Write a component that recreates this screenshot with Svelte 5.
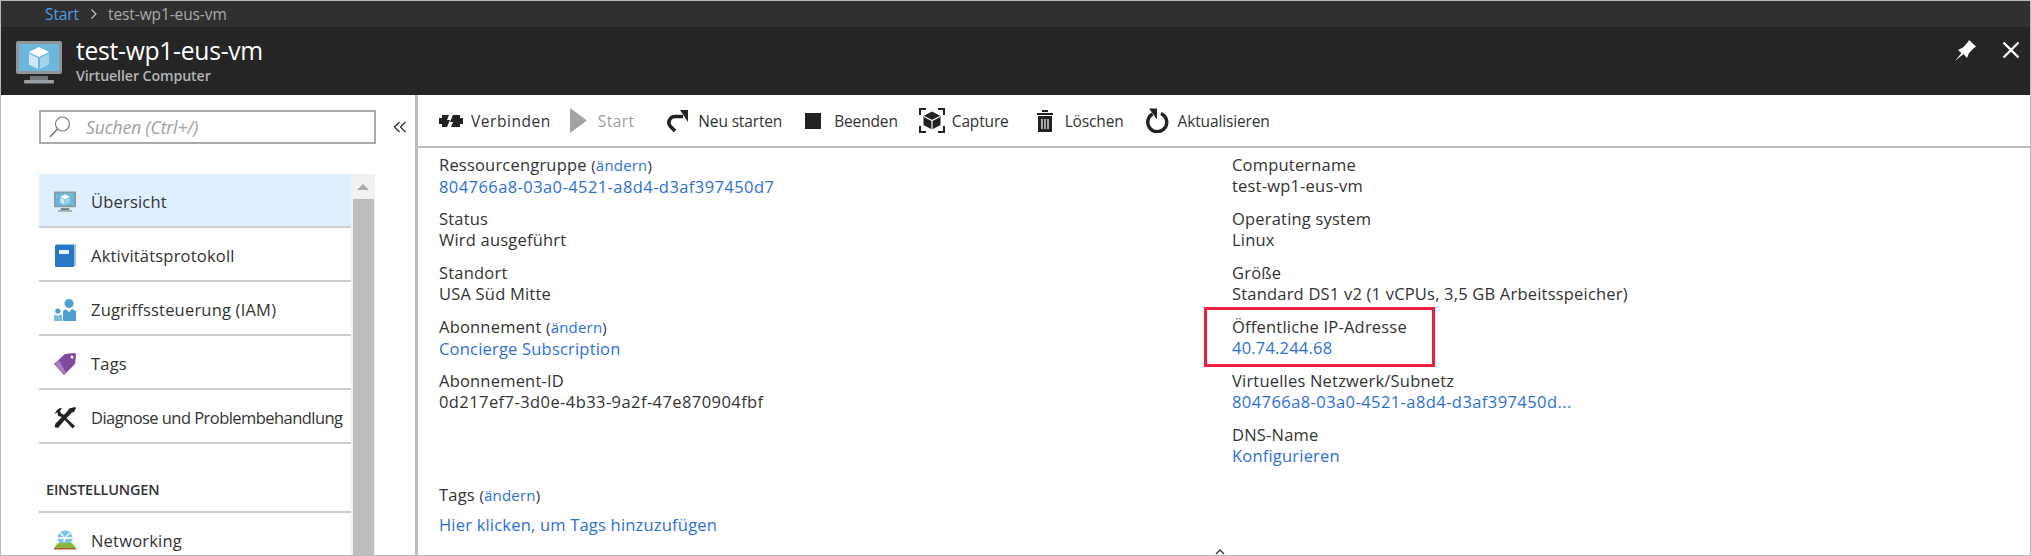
<script>
	const menu = [
		{ label: 'Übersicht', icon: 'vm', active: true },
		{ label: 'Aktivitätsprotokoll', icon: 'log' },
		{ label: 'Zugriffssteuerung (IAM)', icon: 'iam' },
		{ label: 'Tags', icon: 'tag' },
		{ label: 'Diagnose und Problembehandlung', icon: 'tools', tight: true }
	];

	const left = [
		{ label: 'Ressourcengruppe', change: true, value: '804766a8-03a0-4521-a8d4-d3af397450d7', link: true, wide: true },
		{ label: 'Status', value: 'Wird ausgeführt' },
		{ label: 'Standort', value: 'USA Süd Mitte' },
		{ label: 'Abonnement', change: true, value: 'Concierge Subscription', link: true },
		{ label: 'Abonnement-ID', value: '0d217ef7-3d0e-4b33-9a2f-47e870904fbf', wide: true }
	];

	const right = [
		{ label: 'Computername', value: 'test-wp1-eus-vm' },
		{ label: 'Operating system', value: 'Linux' },
		{ label: 'Größe', value: 'Standard DS1 v2 (1 vCPUs, 3,5 GB Arbeitsspeicher)' },
		{ label: 'Öffentliche IP-Adresse', value: '40.74.244.68', link: true, marked: true },
		{ label: 'Virtuelles Netzwerk/Subnetz', value: '804766a8-03a0-4521-a8d4-d3af397450d...', link: true, wide: true },
		{ label: 'DNS-Name', value: 'Konfigurieren', link: true }
	];
</script>

{#snippet vmIcon(size)}
	<svg width={size} height={size} viewBox="0 0 46 46">
		<rect x="0" y="1" width="46" height="33" rx="2" fill="#8f9599" />
		<rect x="3" y="4" width="40" height="27" fill="#6db7dc" />
		<path d="M14 36h18v4H14z" fill="#6f7478" />
		<rect x="8" y="40" width="30" height="3.5" rx="1" fill="#9a9fa3" />
		<path d="M23 7l10 5-10 5-10-5z" fill="#fff" />
		<path d="M13 13.500l9 4.500v11l-9-4.500z" fill="#cfe8f4" />
		<path d="M33 13.500l-9 4.500v11l9-4.500z" fill="#a5d4ea" />
	</svg>
{/snippet}

{#snippet field(f)}
	<div class="field" class:marked={f.marked}>
		<div>
			{f.label}
			{#if f.change}
				<span class="change">(<span class="link">ändern</span>)</span>
			{/if}
		</div>
		<div class:link={f.link} class:wide={f.wide}>{f.value}</div>
	</div>
{/snippet}

<div class="page">
	<div class="crumbs">
		<span class="start">Start</span>
		<svg class="chev" width="8" height="12" viewBox="0 0 8 12"><path d="M1.500 1.500L6 6l-4.500 4.500" fill="none" stroke="#ccc" stroke-width="1.100" /></svg>
		<span>test-wp1-eus-vm</span>
	</div>

	<header class="head">
		<div class="head-icon">{@render vmIcon(46)}</div>
		<div class="head-text">
			<div class="title">test-wp1-eus-vm</div>
			<div class="sub">Virtueller Computer</div>
		</div>
		<svg class="pin" width="21" height="21" viewBox="0 0 21 21">
			<path d="M0 21l6.500-8L3 10l5-2.500L13 2l1-2 7 6.500-2 1.500-5 5-2 5-3.500-4z" fill="#fff" />
		</svg>
		<svg class="close" width="18" height="18" viewBox="0 0 18 18">
			<path d="M1.500 1.500l15 15M16.500 1.500l-15 15" stroke="#fff" stroke-width="2.400" />
		</svg>
	</header>

	<div class="body">
		<aside class="side">
			<div class="search-row">
				<div class="search">
					<svg width="22" height="24" viewBox="0 0 22 24">
						<circle cx="13.500" cy="9" r="7" fill="none" stroke="#777" stroke-width="1.200" />
						<path d="M8.500 14L1 22" stroke="#777" stroke-width="1.600" />
					</svg>
					<span>Suchen (Ctrl+/)</span>
				</div>
				<svg class="collapse" width="14" height="12" viewBox="0 0 14 12">
					<path d="M6.500 1L1.500 6l5 5M12.500 1l-5 5 5 5" fill="none" stroke="#333" stroke-width="1.300" />
				</svg>
			</div>

			<div class="menu-wrap">
				<nav class="menu">
					{#each menu as m}
						<div class="item" class:active={m.active} class:tight={m.tight}>
							<span class="item-icon">
								{#if m.icon === 'vm'}
									{@render vmIcon(22)}
								{:else if m.icon === 'log'}
									<svg width="22" height="23" viewBox="0 0 22 23">
										<rect x="2" y="0" width="20" height="22" fill="#9cc3e6" />
										<rect x="1" y="1" width="19" height="22" rx="1" fill="#2a76c6" />
										<rect x="5" y="6" width="10" height="4" fill="#e6f0fa" />
									</svg>
								{:else if m.icon === 'iam'}
									<svg width="22" height="22" viewBox="0 0 22 22">
										<circle cx="15" cy="4.500" r="4.500" fill="#4e9fd0" />
										<path d="M9 12l3-2 3 3 3-3 4 2v10H9z" fill="#4e9fd0" />
										<circle cx="3.800" cy="12" r="2.600" fill="#4e9fd0" />
										<path d="M0 16.500l2-1 2 1.500 2-1.500 2 1v5.500H0z" fill="#7fbbdf" />
									</svg>
								{:else if m.icon === 'tag'}
									<svg width="22" height="22" viewBox="0 0 22 22">
										<path d="M0 11L11 1l9-1q2 0 2 2l-1 9L10 22z" fill="#7f4a9e" />
										<path d="M0 11l10 11 2-2L5 7z" fill="#a77cc2" />
										<circle cx="18" cy="4" r="1.500" fill="#fff" />
									</svg>
								{:else}
									<svg width="22" height="22" viewBox="0 0 22 22">
										<path d="M1 6L3 3l3-2 2 .5L6 4l1 2.500L9 7l2 3 10 9-2.500 2.500-9-10-3-2-2.500-.5L3.500 5 1.500 7z" fill="#222" />
										<path d="M21 0l1 1-2 4-2 .5L9 15l-5 6-3.500-1 1-3.500L7 11l7-7.500 1-2z" fill="#222" />
									</svg>
								{/if}
							</span>
							<span class="item-label">{m.label}</span>
						</div>
					{/each}
					<div class="group">EINSTELLUNGEN</div>
					<div class="item last">
						<span class="item-icon">
							<svg width="22" height="20" viewBox="0 0 22 20">
								<circle cx="11" cy="8" r="7.500" fill="#7cc3e6" />
								<path d="M6 3q5 3 4 9M16 3q-5 3-6 9M3.500 8h15" fill="none" stroke="#fff" stroke-width="1.400" />
								<path d="M4 13h14l4 5H0z" fill="#8cb83e" />
								<rect x="0" y="18" width="22" height="1.500" fill="#b5533c" />
							</svg>
						</span>
						<span class="item-label">Networking</span>
					</div>
				</nav>
				<div class="scroll">
					<div class="scroll-up"><i></i></div>
					<div class="thumb"></div>
				</div>
			</div>
		</aside>

		<main class="main">
			<div class="toolbar">
				<span class="cmd c-connect">
					<svg width="24" height="14" viewBox="0 0 24 14">
						<path d="M0 4h3V1h7l-2 5h3l-3 7H3v-3H0z" fill="#222" />
						<path d="M14 1h7v3h3v6h-3v3h-9l2-5h-3l3-7z" fill="#222" />
					</svg>
					Verbinden
				</span>
				<span class="cmd off c-start">
					<svg width="17" height="25" viewBox="0 0 17 25"><path d="M0 0l17 12.500L0 25z" fill="#a3a3a3" /></svg>
					Start
				</span>
				<span class="cmd c-restart">
					<svg width="23" height="24" viewBox="0 0 23 24">
						<path d="M17 7.500H9.500a6 6 0 0 0-5 10l4.500 4.500" fill="none" stroke="#222" stroke-width="3.600" />
						<path d="M14 1l8 0v12z" fill="#222" />
					</svg>
					Neu starten
				</span>
				<span class="cmd c-stop">
					<svg width="16" height="16" viewBox="0 0 16 16"><rect width="16" height="16" fill="#222" /></svg>
					Beenden
				</span>
				<span class="cmd c-capture">
					<svg width="26" height="25" viewBox="0 0 26 25">
						<path d="M1 7V1h6M19 1h6v6M25 18v6h-6M7 24H1v-6" fill="none" stroke="#222" stroke-width="2" />
						<path d="M13 3.500l8.500 4.500v9L13 21.500 4.500 17V8z" fill="#222" />
						<path d="M5 8.500l8 4 8-4M13 12.500v9" fill="none" stroke="#fff" stroke-width="1.200" />
					</svg>
					Capture
				</span>
				<span class="cmd c-delete">
					<svg width="16" height="22" viewBox="0 0 16 22">
						<path d="M0 3h16v2H0zM5 0h6v2H5zM1 6h14v16H1z" fill="#222" />
						<path d="M5 9v10M8 9v10M11 9v10" stroke="#fff" stroke-width="1.200" />
					</svg>
					Löschen
				</span>
				<span class="cmd c-refresh">
					<svg width="24" height="25" viewBox="0 0 24 25">
						<path d="M15 5.500a9.500 9.500 0 1 1-8.500 .5" fill="none" stroke="#222" stroke-width="3.400" />
						<path d="M3 .5h8v11z" fill="#222" />
					</svg>
					Aktualisieren
				</span>
			</div>

			<div class="details">
				<div class="col">
					{#each left as f}{@render field(f)}{/each}
				</div>
				<div class="col">
					{#each right as f}{@render field(f)}{/each}
				</div>
			</div>

			<div class="tags">
				<div>Tags <span class="change">(<span class="link">ändern</span>)</span></div>
				<div class="link add">Hier klicken, um Tags hinzuzufügen</div>
			</div>

			<svg class="caret" width="10" height="6" viewBox="0 0 10 6"><path d="M1 5l4-4 4 4" fill="none" stroke="#333" stroke-width="1.300" /></svg>
		</main>
	</div>
</div>

<style>
	:global(body) {
		margin: 0;
		background: #fff;
	}

	.page {
		width: 2031px;
		height: 556px;
		box-sizing: border-box;
		border: 1px solid #b9b9b9;
		display: flex;
		flex-direction: column;
		overflow: hidden;
		font-family: 'Open Sans', sans-serif;
		font-size: 16.5px;
		color: #333;
	}

	.crumbs {
		height: 26px;
		flex: none;
		background: #303030;
		color: #a9a9a9;
		display: flex;
		align-items: center;
		padding-left: 44px;
		font-size: 15.5px;
		letter-spacing: -0.1px;
	}

	.start {
		color: #4f9fe6;
	}

	.chev {
		margin: 0 10px 0 11px;
	}

	.head {
		height: 68px;
		flex: none;
		background: #252525;
		display: flex;
		align-items: center;
		padding-left: 15px;
		color: #fff;
	}

	.head-icon {
		width: 46px;
		height: 46px;
		margin-right: 14px;
		margin-top: 3px;
	}

	.head-text {
		flex: 1;
		margin-top: -2px;
	}

	.title {
		font-size: 24.7px;
		line-height: 32px;
		letter-spacing: -0.3px;
	}

	.sub {
		font-size: 14.2px;
		font-weight: 600;
		line-height: 18px;
		color: #b4b4b4;
		letter-spacing: -0.1px;
	}

	.pin {
		margin-right: 26px;
		margin-top: -22px;
	}

	.close {
		margin-right: 10px;
		margin-top: -22px;
	}

	.body {
		flex: 1;
		display: flex;
		min-height: 0;
	}

	.side {
		flex: none;
		box-sizing: border-box;
		padding: 15px 0 0 38px;
		border-right: 3px solid #bdbdbd;
		width: 417px;
	}

	.search-row {
		display: flex;
		align-items: center;
		height: 34px;
	}

	.search {
		width: 337px;
		height: 34px;
		box-sizing: border-box;
		border: 2px solid #a9a9a9;
		display: flex;
		align-items: center;
		padding-left: 8px;
		gap: 15px;
		font-style: italic;
		color: #a0a0a0;
		font-size: 17.5px;
		letter-spacing: -0.1px;
	}

	.collapse {
		margin-left: 17px;
	}

	.menu-wrap {
		display: flex;
		margin-top: 30px;
		width: 336px;
		height: 400px;
	}

	.menu {
		width: 312px;
		flex: none;
	}

	.item {
		height: 54px;
		box-sizing: border-box;
		padding-top: 3px;
		border-bottom: 2px solid #cdcdcd;
		display: flex;
		align-items: center;
		padding-left: 15px;
		white-space: nowrap;
		letter-spacing: 0.2px;
	}

	.item.tight {
		letter-spacing: -0.55px;
	}

	.item.active {
		background: #dfefff;
	}

	.item.last {
		border-bottom: 0;
		padding-top: 0;
	}

	.item-icon {
		width: 22px;
		height: 23px;
		display: flex;
		align-items: center;
		justify-content: center;
		margin-right: 15px;
	}

	.group {
		height: 69px;
		box-sizing: border-box;
		padding: 36px 0 0 7px;
		border-bottom: 2px solid #cdcdcd;
		font-size: 14.5px;
		font-weight: 600;
		line-height: 20px;
		color: #333;
		letter-spacing: -0.2px;
	}

	.scroll {
		width: 24px;
		flex: none;
		background: #f1f1f1;
		display: flex;
		flex-direction: column;
		align-items: center;
	}

	.scroll-up {
		height: 25px;
		flex: none;
		width: 100%;
		display: flex;
		align-items: center;
		justify-content: center;
	}

	.scroll-up i {
		width: 0;
		height: 0;
		border: 6px solid transparent;
		border-top: 0;
		border-bottom: 6px solid #aaa;
	}

	.thumb {
		width: 21px;
		flex: 1;
		background: #bdbdbd;
	}

	.main {
		flex: 1;
		min-width: 0;
		position: relative;
	}

	.toolbar {
		height: 51px;
		border-bottom: 2px solid #bdbdbd;
		display: flex;
		align-items: center;
		padding-left: 21px;
		font-size: 15.5px;
		letter-spacing: -0.15px;
	}

	.cmd {
		display: flex;
		align-items: center;
		gap: 8px;
		white-space: nowrap;
		color: #333;
	}

	.cmd.off {
		color: #a0a0a0;
	}

	.c-connect {
		letter-spacing: 0.55px;
	}

	.c-start {
		margin-left: 19px;
		gap: 11px;
		letter-spacing: 0.4px;
	}

	.c-restart {
		margin-left: 32px;
		gap: 9px;
	}

	.c-stop {
		margin-left: 23px;
		gap: 13px;
	}

	.c-capture {
		margin-left: 21px;
		gap: 7px;
	}

	.c-delete {
		margin-left: 28px;
		gap: 12px;
	}

	.c-refresh {
		margin-left: 22px;
	}

	.details {
		display: grid;
		grid-template-columns: 793px 1fr;
		padding: 6px 0 0 21px;
		height: 336px;
		box-sizing: border-box;
	}

	.field {
		height: 54px;
		line-height: 21px;
		position: relative;
		white-space: nowrap;
		letter-spacing: 0.2px;
	}

	.wide {
		letter-spacing: 0.42px;
	}

	.field.marked::after {
		content: '';
		position: absolute;
		left: -28px;
		top: -9px;
		width: 225px;
		height: 54px;
		border: 3px solid #ee1c3f;
	}

	.change {
		font-size: 15px;
	}

	.link {
		color: #2d6fd8;
	}

	.tags {
		padding-left: 21px;
		line-height: 21px;
		letter-spacing: 0.2px;
	}

	.add {
		margin-top: 8px;
	}

	.caret {
		position: absolute;
		left: 797px;
		bottom: 0;
	}
</style>
